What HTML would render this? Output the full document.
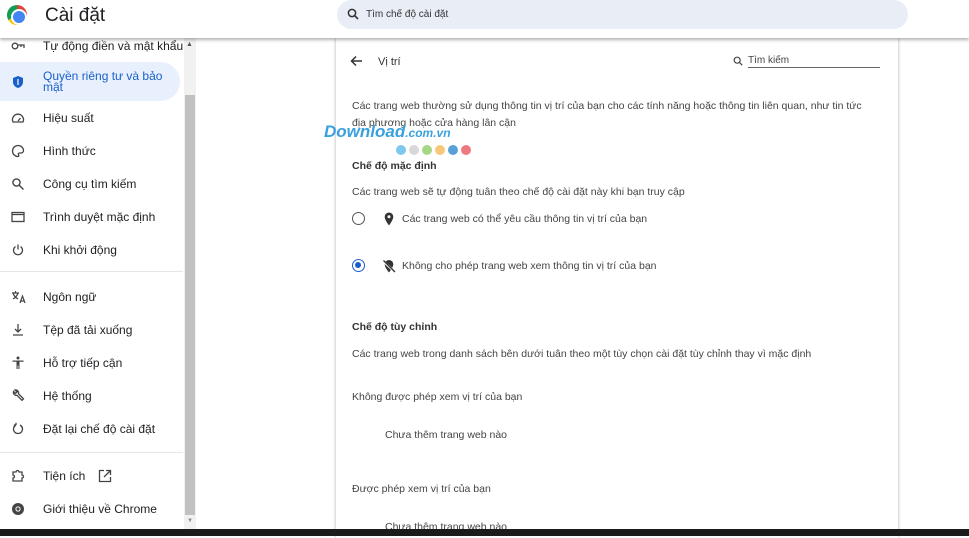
<!DOCTYPE html>
<html><head><meta charset="utf-8"><style>
*{margin:0;padding:0;box-sizing:border-box}
body{width:969px;height:536px;overflow:hidden;background:#fff;font-family:"Liberation Sans","Noto Sans CJK SC",sans-serif;color:#202124;position:relative}
.hdr{position:absolute;left:0;top:0;width:969px;height:38px;background:#fff;box-shadow:0 2px 3px rgba(0,0,0,.3);z-index:5}
.logo{position:absolute;left:7px;top:5px;width:20px;height:20px;border-radius:50%;background:conic-gradient(#db4437 0 120deg,#f4c20d 120deg 240deg,#0f9d58 240deg 360deg)}
.logo:after{content:"";position:absolute;border-radius:50%;background:#4285f4;border:2px solid #fff;left:4px;top:4px;width:12px;height:12px}
.title{position:absolute;left:45px;top:5px;font-size:19px}
.search{position:absolute;left:337px;top:0;width:571px;height:29px;background:#e9edf6;border-radius:15px;font-size:10px;color:#333}
.search span{position:absolute;left:29px;top:9px}
.side{position:absolute;left:0;top:38px;width:184px;height:491px}
.it{position:absolute;left:0;height:20px;font-size:12px;display:flex;align-items:center}
.it svg{position:absolute;left:11px}
.it .tx{position:absolute;left:43px;white-space:nowrap}
.sel{position:absolute;left:0;top:24px;width:180px;height:39px;background:#e8f0fe;border-radius:0 20px 20px 0}
.sep{position:absolute;left:0;width:183px;height:1px;background:#e6e6e6}
.sb{position:absolute;left:184px;top:38px;width:12px;height:491px;background:#f1f1f1}
.thumb{position:absolute;left:185px;top:95px;width:10px;height:420px;background:#c1c1c1}
.card{position:absolute;left:336px;top:38px;width:562px;height:500px;background:#fff;box-shadow:0 0 3px rgba(0,0,0,.35)}
.t{position:absolute;font-size:10.5px;color:#444;white-space:nowrap}
.h{font-weight:bold;color:#333}
.task{position:absolute;left:0;top:529px;width:969px;height:7px;background:#1b1b1b;z-index:9}
.radio{position:absolute;width:13px;height:13px;border:1.5px solid #555;border-radius:50%}
</style></head><body>
<div class="hdr">
<div class="logo"></div>
<div class="title">Cài đặt</div>
<div class="search"><svg style="position:absolute;left:10px;top:8px" width="12" height="12" viewBox="0 0 12 12"><circle cx="5" cy="5" r="3.6" fill="none" stroke="#333" stroke-width="1.5"/><path d="M7.6 7.6L11 11" stroke="#333" stroke-width="1.6"/></svg><span>Tìm chế độ cài đặt</span></div>
</div>
<div class="side">
<div class="sel"></div>
<div class="it" style="top:-2px"><svg width="14" height="14" viewBox="0 0 14 14" fill="none" stroke="#444" stroke-width="1.3"><circle cx="4" cy="7" r="2.8"/><path d="M7 6h6v3M10 6v2"/></svg><span class="tx">Tự động điền và mật khẩu</span></div>
<div class="it" style="top:34px;color:#1a5fc9"><svg width="14" height="14" viewBox="0 0 14 14"><path d="M7 1l5 2v4c0 3-2.2 5-5 6-2.8-1-5-3-5-6V3z" fill="#1a5fc9"/><path d="M7 4v6" stroke="#fff" stroke-width="1.2"/></svg><span class="tx" style="line-height:11px">Quyền riêng tư và bảo<br>mật</span></div>
<div class="it" style="top:70px"><svg width="14" height="14" viewBox="0 0 14 14" fill="none" stroke="#444" stroke-width="1.3"><path d="M2 11a5.5 5.5 0 1 1 10 0z"/><path d="M7 10l2.5-3"/></svg><span class="tx">Hiệu suất</span></div>
<div class="it" style="top:103px"><svg width="14" height="14" viewBox="0 0 14 14" fill="none" stroke="#444" stroke-width="1.3"><path d="M7 1.5a5.5 5.5 0 0 0 0 11c1 0 1-1 .5-1.8-.5-.8 0-1.7 1-1.7H10a2.5 2.5 0 0 0 2.5-2.5C12.5 3.8 10 1.5 7 1.5z"/></svg><span class="tx">Hình thức</span></div>
<div class="it" style="top:136px"><svg width="14" height="14" viewBox="0 0 14 14" fill="none" stroke="#444" stroke-width="1.4"><circle cx="5.5" cy="5.5" r="3.6"/><path d="M8.2 8.2L12.5 12.5"/></svg><span class="tx">Công cụ tìm kiếm</span></div>
<div class="it" style="top:169px"><svg width="14" height="14" viewBox="0 0 14 14" fill="none" stroke="#444" stroke-width="1.3"><rect x="1" y="2.5" width="12" height="9"/><path d="M1 4.5h12"/></svg><span class="tx">Trình duyệt mặc định</span></div>
<div class="it" style="top:202px"><svg width="14" height="14" viewBox="0 0 14 14" fill="none" stroke="#444" stroke-width="1.3"><path d="M4.5 3.5a4.5 4.5 0 1 0 5 0M7 1.5v5"/></svg><span class="tx">Khi khởi động</span></div>
<div class="sep" style="top:233px"></div>
<div class="it" style="top:249px"><svg width="16" height="14" viewBox="0 0 16 14" fill="none" stroke="#444" stroke-width="1.2"><path d="M1 3h7M4.5 1v2M2 3c1 3 3 5 5 6M7 3c-1 3-3 5-5 6M9 13l2.5-7 2.5 7M10 11h3"/></svg><span class="tx">Ngôn ngữ</span></div>
<div class="it" style="top:282px"><svg width="14" height="14" viewBox="0 0 14 14" fill="none" stroke="#444" stroke-width="1.3"><path d="M7 1v8M4 6l3 3 3-3M2 12h10"/></svg><span class="tx">Tệp đã tải xuống</span></div>
<div class="it" style="top:315px"><svg width="14" height="14" viewBox="0 0 14 14" fill="#444"><circle cx="7" cy="2" r="1.5"/><path d="M1.5 4.5h11v1.3H8.5V13H7.4V9.5H6.6V13H5.5V5.8H1.5z"/></svg><span class="tx">Hỗ trợ tiếp cận</span></div>
<div class="it" style="top:348px"><svg width="14" height="14" viewBox="0 0 14 14" fill="none" stroke="#444" stroke-width="1.3"><path d="M2.5 2.5l2 2 1.5-1.5-2-2a3 3 0 0 1 3.5 3.8l5 5-1.5 1.5-5-5A3 3 0 0 1 2.5 2.5z"/></svg><span class="tx">Hệ thống</span></div>
<div class="it" style="top:381px"><svg width="14" height="14" viewBox="0 0 14 14" fill="none" stroke="#444" stroke-width="1.3"><path d="M5 3a4.5 4.5 0 1 0 4 0M5 3V0.8M5 3H2.8"/></svg><span class="tx">Đặt lại chế độ cài đặt</span></div>
<div class="sep" style="top:414px"></div>
<div class="it" style="top:428px"><svg width="14" height="14" viewBox="0 0 14 14" fill="none" stroke="#444" stroke-width="1.3"><path d="M2 3h3a1.5 1.5 0 0 1 3 0h3v3a1.5 1.5 0 0 1 0 3v3H2V9a1.5 1.5 0 0 0 0-3z"/></svg><span class="tx">Tiện ích</span><svg style="left:98px" width="14" height="14" viewBox="0 0 14 14" fill="none" stroke="#444" stroke-width="1.3"><path d="M6 1.5H1.5v11h11V8M8 1.5h4.5V6M12.5 1.5L6 8"/></svg></div>
<div class="it" style="top:461px"><svg width="14" height="14" viewBox="0 0 14 14"><circle cx="7" cy="7" r="6" fill="#444"/><circle cx="7" cy="7" r="2.6" fill="#fff"/><circle cx="7" cy="7" r="1.6" fill="#444"/></svg><span class="tx">Giới thiệu về Chrome</span></div>
</div>
<div class="sb"></div><div class="thumb"></div>
<div style="position:absolute;left:186px;top:41px;font-size:7px;color:#555">▲</div>
<div style="position:absolute;left:187px;top:518px;font-size:6px;color:#888">▼</div>
<div class="card">
<svg style="position:absolute;left:14px;top:17px" width="13" height="12" viewBox="0 0 13 12" fill="none" stroke="#333" stroke-width="1.5"><path d="M12 6H2M6 1.5L1.5 6 6 10.5"/></svg>
<div class="t" style="left:42px;top:18px;font-size:11px;color:#333">Vị trí</div>
<svg style="position:absolute;left:397px;top:18px" width="10" height="10" viewBox="0 0 12 12"><circle cx="5" cy="5" r="3.6" fill="none" stroke="#444" stroke-width="1.4"/><path d="M7.6 7.6L11 11" stroke="#444" stroke-width="1.5"/></svg>
<div class="t" style="left:412px;top:17px;font-size:10px">Tìm kiếm</div>
<div style="position:absolute;left:412px;top:29px;width:132px;height:1px;background:#666"></div>
<div class="t" style="left:16px;top:62px">Các trang web thường sử dụng thông tin vị trí của bạn cho các tính năng hoặc thông tin liên quan, như tin tức</div>
<div class="t" style="left:16px;top:79px">địa phương hoặc cửa hàng lân cận</div>
<div class="t" style="left:-12px;top:84px;font-size:17px;font-weight:bold;font-style:italic;color:#3aa0e0">Download<span style="font-size:12px">.com.vn</span></div>
<div style="position:absolute;left:60px;top:107px;display:flex;gap:3px">
<i style="width:10px;height:10px;border-radius:50%;background:#7cc8f0"></i><i style="width:10px;height:10px;border-radius:50%;background:#d8d8d8"></i><i style="width:10px;height:10px;border-radius:50%;background:#a6d686"></i><i style="width:10px;height:10px;border-radius:50%;background:#f7c77a"></i><i style="width:10px;height:10px;border-radius:50%;background:#5a9fd6"></i><i style="width:10px;height:10px;border-radius:50%;background:#ee7a80"></i></div>
<div class="t h" style="left:16px;top:122px">Chế độ mặc định</div>
<div class="t" style="left:16px;top:148px">Các trang web sẽ tự động tuân theo chế độ cài đặt này khi bạn truy cập</div>
<div class="radio" style="left:16px;top:174px"></div>
<svg style="position:absolute;left:48px;top:174px" width="10" height="14" viewBox="0 0 10 14"><path d="M5 0.5a4.3 4.3 0 0 0-4.3 4.3C.7 8 5 13.5 5 13.5S9.3 8 9.3 4.8A4.3 4.3 0 0 0 5 .5z" fill="#333"/><circle cx="5" cy="4.8" r="1.5" fill="#fff"/></svg>
<div class="t" style="left:66px;top:175px">Các trang web có thể yêu cầu thông tin vị trí của bạn</div>
<div class="radio" style="left:16px;top:221px;border-color:#1a5fc9"><div style="position:absolute;left:2px;top:2px;width:6px;height:6px;border-radius:50%;background:#1a5fc9"></div></div>
<svg style="position:absolute;left:46px;top:221px" width="14" height="14" viewBox="0 0 14 14"><path d="M7 1a4.3 4.3 0 0 0-4.3 4.3C2.7 8.5 7 13.5 7 13.5s4.3-5 4.3-8.2A4.3 4.3 0 0 0 7 1z" fill="#333"/><path d="M1 2l12 11" stroke="#fff" stroke-width="2.4"/><path d="M1.5 1.5l11.5 11.5" stroke="#333" stroke-width="1.3"/></svg>
<div class="t" style="left:66px;top:222px">Không cho phép trang web xem thông tin vị trí của bạn</div>
<div class="t h" style="left:16px;top:283px">Chế độ tùy chỉnh</div>
<div class="t" style="left:16px;top:310px">Các trang web trong danh sách bên dưới tuân theo một tùy chọn cài đặt tùy chỉnh thay vì mặc định</div>
<div class="t" style="left:16px;top:353px">Không được phép xem vị trí của bạn</div>
<div class="t" style="left:49px;top:391px">Chưa thêm trang web nào</div>
<div class="t" style="left:16px;top:445px">Được phép xem vị trí của bạn</div>
<div class="t" style="left:49px;top:483px">Chưa thêm trang web nào</div>
</div>
<div class="task"></div>
</body></html>
